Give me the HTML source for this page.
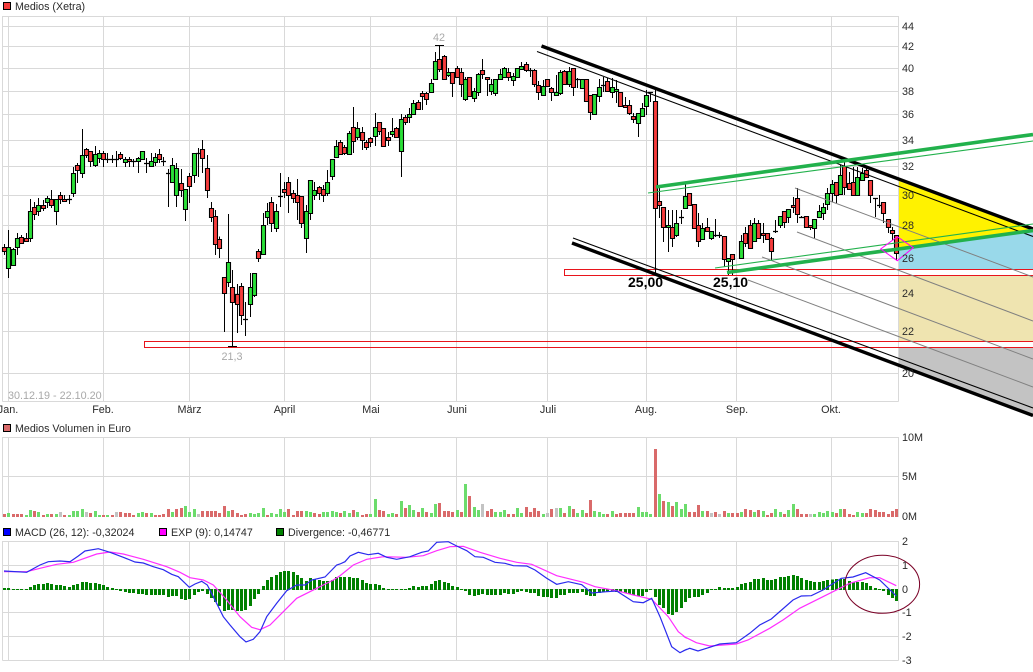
<!DOCTYPE html>
<html lang="de">
<head>
<meta charset="utf-8">
<title>Medios (Xetra)</title>
<style>
html,body{margin:0;padding:0;background:#fff;width:1033px;height:672px;overflow:hidden}
svg{position:absolute;left:0;top:0;display:block}
text{font-family:"Liberation Sans",Arial,sans-serif;font-size:10.8px;fill:#2a2a2a}
.l{font-size:10.7px}
.g{fill:#a8a8a8}
.b{font-size:14px;font-weight:bold;fill:#000}
.m{text-anchor:middle}
</style>
</head>
<body>
<svg id="c" xmlns="http://www.w3.org/2000/svg" width="1033" height="672" viewBox="0 0 1033 672">
  <!-- fills -->
  <polygon points="899,181 1033,230 1033,231 899,249" fill="#fff200"/>
  <polygon points="899,249 1033,231 1033,269 899,269" fill="#99d9ea"/>
  <rect x="899" y="276" width="134" height="65.500" fill="#efe4b0"/>
  <polygon points="899,348 1033,348 1033,415 899,365" fill="#c3c3c3"/>
  <!-- grid -->
  <path id="grid" fill="none" stroke="#d9d9d9" stroke-width="1"/>
  <!-- red boxes -->
  <path d="M1033 269.500H564.500V275.500H1033M1033 341.500H144.500V347.500H1033" fill="none" stroke="#e8141c" stroke-width="1"/>
  <!-- candles -->
  <path id="wick" fill="none" stroke="#000" stroke-width="1"/>
  <path id="gb" fill="#2ae038" stroke="#000" stroke-width="1.100"/>
  <path id="rb" fill="#f53c3c" stroke="#000" stroke-width="1.100"/>
  <path id="doji" fill="none" stroke="#000" stroke-width="1.300"/>
  <path d="M435 45.500H444M228 346.500H237" stroke="#000" stroke-width="1"/>
  <!-- gray lines -->
  <g stroke="#808080" stroke-width="1" fill="none">
    <line x1="795" y1="188" x2="1033" y2="277"/>
    <line x1="797" y1="232" x2="1033" y2="321"/>
    <line x1="762" y1="257" x2="1033" y2="359"/>
    <line x1="748" y1="280" x2="1033" y2="387"/>
  </g>
  <!-- trend channels -->
  <g stroke="#000" fill="none">
    <line x1="541.500" y1="46" x2="1033" y2="229" stroke-width="3.400"/>
    <line x1="537" y1="51.500" x2="1033" y2="236.500" stroke-width="1.100"/>
    <line x1="572" y1="243" x2="1033" y2="415.500" stroke-width="3.400"/>
    <line x1="573" y1="238" x2="1033" y2="408" stroke-width="1.100"/>
  </g>
  <g stroke="#22b14c" fill="none">
    <line x1="656" y1="187" x2="1033" y2="134.500" stroke-width="3.600"/>
    <line x1="648" y1="193" x2="1033" y2="141" stroke-width="1.100"/>
    <line x1="727" y1="272.500" x2="1033" y2="230.500" stroke-width="3.600"/>
    <line x1="715" y1="268" x2="1033" y2="224" stroke-width="1.100"/>
  </g>
  <polygon points="897.300,236.700 913.300,247.700 897.300,260.700 880.700,249" fill="none" stroke="#ff00ff" stroke-width="1"/>
  <!-- volume -->
  <path id="vg" fill="#6cdc6c"/>
  <path id="vr" fill="#d96a6a"/>
  <path id="vc" fill="#c3c3c3"/>
  <!-- macd -->
  <path id="div" fill="#008000"/>
  <polyline id="mag" fill="none" stroke="#ff2eff" stroke-width="1.200"/>
  <polyline id="blu" fill="none" stroke="#2a2aee" stroke-width="1.200"/>
  <ellipse cx="882.300" cy="584.300" rx="37.300" ry="29" fill="none" stroke="#7a0026" stroke-width="1"/>

  <!-- legends -->
  <rect x="3.500" y="2.500" width="7" height="7" fill="#f53c3c" stroke="#000"/>
  <text class="l" x="15" y="10">Medios (Xetra)</text>
  <rect x="3.500" y="424.500" width="7" height="7" fill="#d96a6a" stroke="#000"/>
  <text class="l" x="15" y="432">Medios Volumen in Euro</text>
  <rect x="3.500" y="528.500" width="7" height="7" fill="#0000ff" stroke="#000"/>
  <text class="l" x="15" y="536">MACD (26, 12): -0,32024</text>
  <rect x="159.500" y="528.500" width="7" height="7" fill="#ff00ff" stroke="#000"/>
  <text class="l" x="171" y="536">EXP (9): 0,14747</text>
  <rect x="276.500" y="528.500" width="7" height="7" fill="#008000" stroke="#000"/>
  <text class="l" x="288" y="536">Divergence: -0,46771</text>

  <!-- y axis main -->
  <text x="902" y="30">44</text><text x="902" y="50">42</text><text x="902" y="72">40</text>
  <text x="902" y="95">38</text><text x="902" y="118">36</text><text x="902" y="144">34</text>
  <text x="902" y="170">32</text><text x="902" y="199">30</text><text x="902" y="229">28</text>
  <text x="902" y="262">26</text><text x="902" y="297">24</text><text x="902" y="335">22</text>
  <text x="902" y="377">20</text>
  <!-- y axis volume -->
  <text x="902" y="441">10M</text><text x="902" y="480">5M</text><text x="902" y="520">0M</text>
  <!-- y axis macd -->
  <text x="902" y="545">2</text><text x="902" y="569">1</text><text x="902" y="593">0</text>
  <text x="902" y="616">-1</text><text x="902" y="640">-2</text><text x="902" y="664">-3</text>
  <!-- x axis -->
  <text class="m" x="8" y="413">Jan.</text><text class="m" x="103" y="413">Feb.</text>
  <text class="m" x="189.500" y="413">März</text><text class="m" x="284.500" y="413">April</text>
  <text class="m" x="371" y="413">Mai</text><text class="m" x="457" y="413">Juni</text>
  <text class="m" x="548" y="413">Juli</text><text class="m" x="646" y="413">Aug.</text>
  <text class="m" x="737" y="413">Sep.</text><text class="m" x="831" y="413">Okt.</text>
  <!-- annotations -->
  <text class="g" x="8" y="399">30.12.19 - 22.10.20</text>
  <text class="g m" x="232" y="360">21,3</text>
  <text class="g m" x="439" y="41">42</text>
  <text class="b" x="628" y="287">25,00</text>
  <text class="b" x="713" y="287">25,10</text>
</svg>
<script>
(function(){
var $=function(i){return document.getElementById(i)};
// grid
var vx=[8.5,103.5,189.5,284.5,370.5,456.5,547.5,646.5,736.5,831.5,2.5,898.5],d="";
vx.forEach(function(x){d+="M"+x+" 16V401.5M"+x+" 437V517M"+x+" 541V660.5"});
[16.5,26.5,46.5,68.5,91.5,114.5,140.5,166.5,195.5,225.5,258.5,293.5,331.5,373.5,401.5,437.5,476.5,541.5,565.5,589.5,612.5,636.5,660.5].forEach(function(y){d+="M2.5 "+y+"H898.5"});
$("grid").setAttribute("d",d);

// candles: [wickTop, bodyTop, bodyBottom, wickBottom, type]
var C="r244,246.5,251,255|g230,246.5,268,278|g248,248.5,264.5,265|g233,238,246.5,255|r235,236.5,243,244|r233,238,241,242|g199,211,238,242|r202,207,213.5,220|g198,205,210.5,216|r200,205,207.5,211|g196,198,202,208|r190,199,205,208|g199,199,210.5,225|r192,195,199,204|r195,199,201,202|d195,199,199,204|g167,173,193,197|r163,165,170,183|g129,155,173,178|r148,149,155,158|r151,151,161,167|g146,154,165,167|g150,153,158,163|r151,153,159,167|d153,158.7,158.7,163|d155,158.7,158.7,163|d151,158.7,158.7,167|r152,154,158,160|g157,159,162,167|r157,159,161,167|d159,161,161,167|g157,158,161,173|g151,151,159,160|d158,162.7,162.7,173|g153,161,166,167|g153,157,162,166|r149,154,159,163|d157,161,161,166|d169,172.7,172.7,207|g158,165,182,183|g163,168,195,207|r169,183,190,197|g189,189,209,221|r173,176,186,203|g153,153,175,183|d148,153,153,177|r140,149,158,173|r155,168,190,198|r202,208,217,222|r210,216,244,255|r236.5,239,248,258|r277,277,293,332|g214,262,282,287|r270,287,302,346|r284,294,304,333|r283,286,315,325|d302,319,319,336|g273,287,304,317|g273,273,295,297|r249,251,258,262|g213,225,254,254|g203,211,217,225|r197,202,223,232|g204,211,228,232|d173,196,196,207|r182,189,192,198|r177,182,195,213|r190,193,198,203|r179,195,202,220|r196,196,223,228|g205,211,238,253|g180,180,213,220|g182,190,195,200|r186,187,193,200|r185,189,195,202|g170,182,193,196|g159,159,176,180|g140,146,157,158|r140,142,154,155|r145,147,153,155|g131,133,154,155|r107,127,141,153|g122,128,137,140|r127,132,140,150|r140,142,147,150|r137,138,142,147|g113,127,136,146|r122,122,131,135|r128,128,146,147|r132,137,140,146|g118,131,134,137|r127,128,137,137|g114,119,151,177|r115,117,122,125|g108,114,117,123|g100,103,114,115|r100,102,109,110|r91,93,96,110|r92,93,99,105|g79,83,92,93|g52,61,79,80|r45,59,69,72|r55,56,79,80|g68,72,75,77|r72,72,83,97|r66,68,77,78|r68,72,84,97|g77,79,99,101|r77,77,96,97|g88,91,98,102|g73,74,92,96|r59,70,74,79|r77,77,79,96|g79,84,91,95|g79,79,93,96|g69,74,79,80|g67,68,77,78|r68,72,77,81|g73,76,80,86|g68,68,77,78|g62,66,69,70|r62,64,70,72|d68,70,70,77|r69,70,84,87|r81,85,92,100|g80,86,95,96|r79,79,86,87|r87,88,92,101|g75,92,95,96|g70,72,93,95|r70,71,84,85|g67,71,84,87|r68,68,87,96|d78,79,79,88|g79,79,88,89|r79,79,101,102|r95,95,112,120|g94,94,114,115|g79,87,96,102|d77,85,85,92|r78,81,91,92|g78,87,92,98|g80,89,91,103|r92,92,106,107|r97,105,107,108|r100,105,113,115|r113,116,119,123|g113,113,123,137|g103,108,116,117|g90,95,106,115|d92,92,92,102|r88,101,208,275|r188,201,205,218|r207,207,227,242|g210,225,227,252|r210,227,238,247|g210,223,235,237|d210,217,217,224|g183,196,208,208|r193,193,205,206|r204,204,228,229|r213,225,241,247|g223,228,239,240|r218,227,231,232|g231,231,238,240|d219,235,235,237|d232,235,235,238|r236,236,259,267|g258,258,261,275|r254,254,259,275|-|g235,241,258,258|r227,233,243,247|r220,225,248,249|g218,223,241,242|r220,223,238,239|r223,233,235,243|r233,233,239,240|r237,238,251,260|d220,231,231,233|g216,216,225,228|r211,211,222,228|g209,209,217,223|r197,205,207,213|r188,198,214,223|d216,217,217,218|r216,216,227,228|r225,225,227,230|g219,219,228,238|g205,211,217,218|g203,207,213,220|g188,193,204,210|g180,184,193,202|r182,182,195,203|g165,175,194,195|r162,166,187,195|r172,183,189,190|r167,182,195,196|g167,177,195,196|g168,173,180,181|r168,170,177,178|r180,180,195,203|d198,198,198,217|d195,205,205,208|r202,202,213,223|r219,219,227,233|r227,230,233,240|r235,235,253,260".split("|");
var X=function(i){return Math.round(4+4.31*i)};
var S=function(v){return Math.round(v)+.5};
var w="",g="",r="",dj="";
C.forEach(function(s,i){
  if(s==="-")return;
  var t=s.charAt(0),a=s.slice(1).split(",").map(Number),x=X(i);
  w+="M"+(x+.5)+" "+a[0]+"V"+a[3];
  if(t==="d"){dj+="M"+(x-2)+" "+S(a[1])+"H"+(x+3)}
  else{
    var y1=S(a[1]),y2=S(a[2]);
    if(y2<=y1)y2=y1+2;
    var b="M"+(x-1.5)+" "+y1+"H"+(x+2.5)+"V"+y2+"H"+(x-1.5)+"Z";
    if(t==="g")g+=b;else r+=b;
  }
});
$("wick").setAttribute("d",w);$("gb").setAttribute("d",g);$("rb").setAttribute("d",r);$("doji").setAttribute("d",dj);

// volume
var V="r3 g4 r3 r3 r3 g2 g7 r6 g5 r2 g3 r3 g3 c5 r2 g2 g6 g6 g8 c5 r4 g6 g2 r2 g2 r2 c5 r5 r4 r4 r2 g4 g5 r4 g4 r2 r2 r3 r8 g5 r8 r9 g11 g5 g8 c3 r6 r6 r6 r6 r4 r11 g6 r7 r4 r2 r3 g4 g3 g4 g9 r2 g4 g3 g8 g5 r8 r2 r6 r6 g6 g5 r4 r3 g5 g5 g6 g5 r4 g6 g4 r7 g5 r2 r3 g3 g18 r7 r6 g3 g4 r3 g16 r9 g12 g7 r5 g9 r5 g4 g13 r14 r6 r6 r5 g7 r5 g33 r21 g10 g7 c13 r6 r8 g5 g5 g7 r3 r3 g9 g4 r10 r5 r9 r6 g3 c4 r8 c9 g9 r4 g11 r8 g4 g7 r4 r17 g6 g5 g3 r3 g6 r3 r4 r4 r4 r4 g10 g5 g5 g3 r68 g23 r16 g15 r11 g15 g8 g13 r5 r5 r12 g6 r6 c4 r5 c3 r6 g4 r4 r4 g5 r8 r7 g5 r7 g6 r2 r4 g8 g5 r3 g7 g13 r8 r3 r3 c3 g3 g5 g4 g6 g5 r4 g8 r8 r3 r2 g5 g4 r4 r8 r7 r5 r5 r3 r6 r8".split(" ");
var vp={g:"",r:"",c:""};
V.forEach(function(s,i){
  var t=s.charAt(0),h=+s.slice(1),x=X(i);
  vp[t]+="M"+(x-1)+" "+(517-h)+"h3v"+h+"h-3z";
});
$("vg").setAttribute("d",vp.g);$("vr").setAttribute("d",vp.r);$("vc").setAttribute("d",vp.c);

// divergence
var D=[2,2,1,1,1,1,3,5,6,6,7,6,5,5,4,3,5,6,8,8,7,7,6,5,3,2,-1,-2,-3,-4,-4,-5,-5,-6,-6,-6,-6,-6,-8,-7,-7,-10,-11,-10,-6,-3,-2,-5,-9,-13,-17,-22,-21,-21,-22,-22,-21,-17,-10,-5,4,10,13,15,18,19,19,18,15,12,9,12,11,10,9,9,10,13,
13,13,13,12,12,10,7,6,6,5,2,1,1,-1,1,1,2,4,3,4,4,6,9,10,8,7,4,3,-1,-2,-6,-7,-6,-5,-6,-6,-6,-6,-4,-5,-5,-3,-2,-3,-4,-4,-7,-8,-8,-9,-9,-6,-6,-4,-4,-4,-3,-6,-7,-7,-4,-3,-3,-2,-3,-3,-4,-5,-6,-7,-7,-3,-1,-8,-16,-19,-25,-26,-23,-19,-13,-9,
-8,-8,-6,-4,-1,-1,3,2,2,2,3,6,7,8,11,11,12,10,10,11,13,13,14,15,14,12,10,9,8,8,9,10,10.5,11,11,11,9,8,8,8,7,4,2,-1,-2,-6,-9,-12];
var dp="";
D.forEach(function(v,i){
  var x=X(i);
  if(v>=0)dp+="M"+(x-1)+" "+(590-v)+"h3v"+v+"h-3z";
  else dp+="M"+(x-1)+" 589h3v"+(-v)+"h-3z";
});
$("div").setAttribute("d",dp);

// macd lines: zoomed coordinates
function conv(start,arr){var o=[];for(var k=0;k<arr.length;k+=2){o.push((start+arr[k]/3).toFixed(1)+","+(420+arr[k+1]/3).toFixed(1))}return o}
var bl=conv(0,[12,453,80,457,120,435,145,425,180,423,210,425,235,408,255,393,295,386,330,397,370,412,405,426,430,429,460,440,490,449,515,463,535,470,568,502,585,492,605,484,622,495,640,530,670,590,690,615,720,650,738,666,760,658,780,635,800,590,830,550,860,512,890,495,915,495,935,480,975,471,1010,435])
 .concat(conv(340,[0,432,15,425,30,408,55,397,85,404,115,400,140,412,170,418,210,410,245,397,265,393,290,367,325,365,350,378,380,392,405,410,430,412,465,427,495,430,520,437,560,438,585,450,620,475,650,493,685,485,725,494,755,519,800,515,830,513,880,545,910,548,935,535,960,590,995,680,1020,698,1040,688]))
 .concat(conv(683,[0,693,20,685,45,693,80,682,110,672,160,668,200,640,230,615,265,597,330,540,355,528,385,527,420,510,475,475,510,471,548,458,590,480,640,528]));
var mg=conv(0,[12,455,80,455,120,445,170,433,220,427,290,402,330,396,370,402,430,418,500,440,540,457,570,473,610,480,640,495,680,540,720,590,755,622,780,629,810,615,850,575,890,535,950,505,1000,480])
 .concat(conv(340,[0,467,40,435,80,418,130,410,200,412,250,407,290,392,330,380,370,379,420,397,480,415,530,427,575,433,650,467,730,487,765,500,830,512,880,525,935,538,985,590,1015,635,1040,655]))
 .concat(conv(683,[0,648,40,668,80,678,160,672,195,660,260,625,300,600,350,565,420,530,500,490,560,473,590,473,640,497]));
$("blu").setAttribute("points",bl.join(" "));
$("mag").setAttribute("points",mg.join(" "));
})();
</script>
</body>
</html>
